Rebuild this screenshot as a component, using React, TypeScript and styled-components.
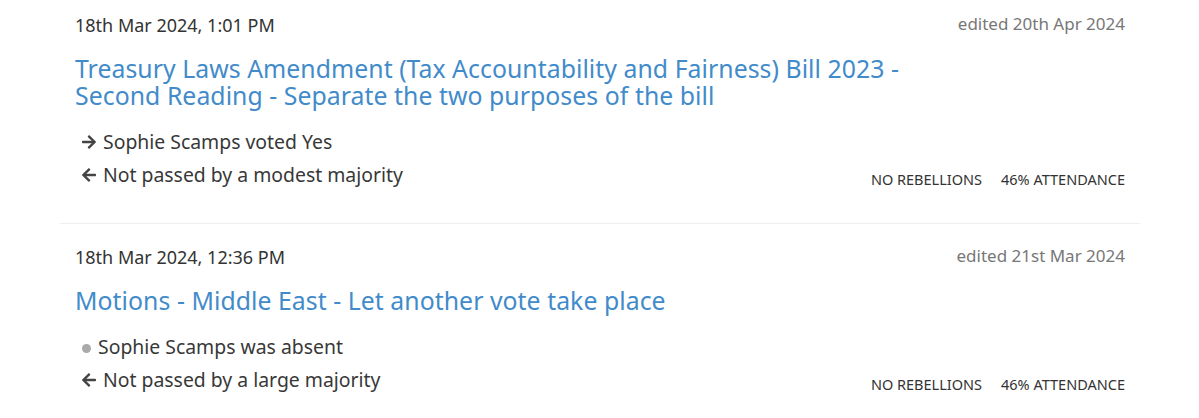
import styled, { createGlobalStyle } from 'styled-components'
import { FaArrowRight, FaArrowLeft } from 'react-icons/fa'

const GlobalStyle = createGlobalStyle`
  body {
    margin: 0;
    background: #fff;
    font-family: 'Noto Sans', 'Open Sans', sans-serif;
    color: #333;
  }
`

type Division = {
  date: string
  edited: string
  title: string
  vote: 'yes' | 'absent'
  voteText: string
  outcome: string
}

const divisions: Division[] = [
  {
    date: '18th Mar 2024, 1:01 PM',
    edited: 'edited 20th Apr 2024',
    title: 'Treasury Laws Amendment (Tax Accountability and Fairness) Bill 2023 - Second Reading - Separate the two purposes of the bill',
    vote: 'yes',
    voteText: 'Sophie Scamps voted Yes',
    outcome: 'Not passed by a modest majority',
  },
  {
    date: '18th Mar 2024, 12:36 PM',
    edited: 'edited 21st Mar 2024',
    title: 'Motions - Middle East - Let another vote take place',
    vote: 'absent',
    voteText: 'Sophie Scamps was absent',
    outcome: 'Not passed by a large majority',
  },
]

export default function App() {
  return <>
    <GlobalStyle />
    <List>
      {divisions.map((d, i) => (
        <Item key={i} last={i === divisions.length - 1}>
          <Header>
            <DateText>{d.date}</DateText>
            <Edited>{d.edited}</Edited>
          </Header>
          <Title href="#">{d.title}</Title>
          <Footer>
            <Lines>
              <Line>
                {d.vote === 'yes'
                  ? <IconSlot><FaArrowRight size={16} /></IconSlot>
                  : <Dot />}
                {d.voteText}
              </Line>
              <Line>
                <IconSlot><FaArrowLeft size={16} /></IconSlot>
                {d.outcome}
              </Line>
            </Lines>
            <Stats>
              <Stat>No rebellions</Stat>
              <Stat>46% attendance</Stat>
            </Stats>
          </Footer>
        </Item>
      ))}
    </List>
  </>
}

const List = styled.div`
  width: 1080px;
  margin: 0 60px;
`

const Item = styled.div<{ last?: boolean }>`
  padding: 11px 15px ${p => p.last ? '0' : '34px'};
  border-bottom: ${p => p.last ? 'none' : '1px solid #eee'};
  margin-bottom: 8px;
`

const Header = styled.div`
  display: flex;
  justify-content: space-between;
  align-items: flex-start;
`

const DateText = styled.span`
  font-size: 18px;
  line-height: 28px;
  color: #333;
`

const Edited = styled.span`
  font-size: 17px;
  line-height: 25px;
  color: #777;
`

const Title = styled.a`
  display: block;
  margin-top: 16px;
  max-width: 860px;
  font-size: 24.8px;
  line-height: 27px;
  letter-spacing: 0.05px;
  color: #428bca;
  text-decoration: none;
`

const Footer = styled.div`
  display: flex;
  justify-content: space-between;
  align-items: flex-end;
  margin-top: 19px;
`

const Lines = styled.div`
  display: flex;
  flex-direction: column;
  gap: 5px;
  padding-left: 6px;
`

const Line = styled.div`
  display: flex;
  align-items: center;
  font-size: 19.4px;
  line-height: 28px;
  color: #383838;
`

const IconSlot = styled.span`
  display: inline-flex;
  width: 22px;
  color: #444;
`

const Dot = styled.span`
  display: inline-block;
  width: 9px;
  height: 9px;
  margin: 2px 7px 0 1px;
  border-radius: 50%;
  background: #aaa;
`

const Stats = styled.div`
  display: flex;
  gap: 19px;
  padding-bottom: 2px;
`

const Stat = styled.span`
  font-size: 14.5px;
  line-height: 16px;
  text-transform: uppercase;
  color: #333;
`
